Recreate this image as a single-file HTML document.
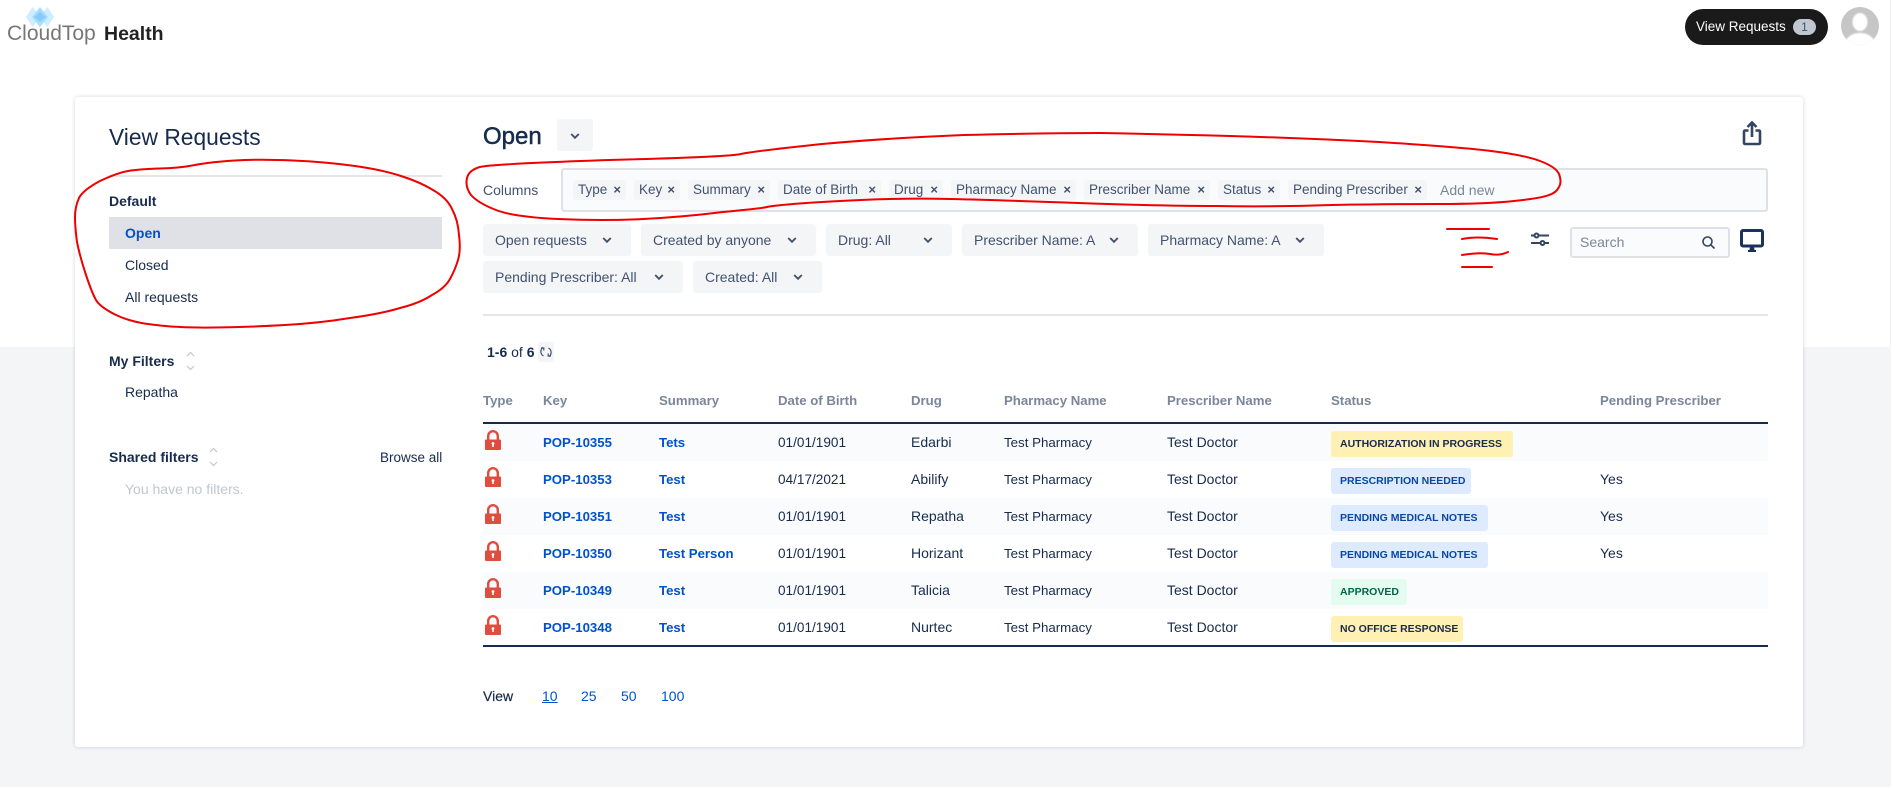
<!DOCTYPE html>
<html lang="en"><head><meta charset="utf-8"><title>View Requests</title>
<style>
html,body{margin:0;padding:0;background:#fff}
body{position:relative;width:1891px;height:787px;overflow:hidden;font-family:"Liberation Sans",sans-serif;font-size:14px;color:#172b4d}
.a,.t,.b,.f,.tag,.row,.badge{position:absolute}
.t{white-space:nowrap;line-height:20px;height:20px}
.bold{font-weight:700}
.blue{color:#0052cc}
.hd{color:#7a869a;font-weight:700;font-size:13.2px}
.k{color:#0052cc;font-weight:700;font-size:13.2px;margin-top:1px}
.p{font-size:13.3px;margin-top:1px}
.d{font-size:13.6px;margin-top:1px}
.f{background:#f4f5f7;border-radius:3px;height:32px;color:#42526e;font-size:14px;line-height:32px;white-space:nowrap;overflow:hidden}
.f span{position:absolute;left:12px;top:0}
.tag{background:#f4f5f7;border-radius:3px;top:180px;height:20px;line-height:20px;color:#42526e;font-size:13.5px;white-space:nowrap;overflow:hidden}
.tag span{position:absolute;left:5px}
.tag i{position:absolute;right:5px;top:0;font-style:normal;font-weight:700;font-size:13px}
.row{left:483px;width:1285px;height:37px}
.badge{left:1331px;height:26px;line-height:26px;border-radius:3px;font-size:10.5px;font-weight:700;white-space:nowrap;box-sizing:border-box;padding-left:9px}
.y{background:#fff0b3;color:#172b4d}.bl{background:#deebff;color:#0747a6}.g{background:#e3fcef;color:#006644}
svg{position:absolute;overflow:visible}
</style></head><body>
<svg width="0" height="0" style="position:absolute"><defs>
<symbol id="chev" viewBox="0 0 10 6"><path d="M1.2 1 5 4.8 8.8 1" fill="none" stroke="#42526e" stroke-width="1.9"/></symbol>
<symbol id="lock" viewBox="0 0 16 20"><path d="M3.200 10V6a4.800 4.800 0 0 1 9.600 0v4" fill="none" stroke="#de4d3e" stroke-width="2.400"/><rect x="0" y="9.500" width="16" height="10.500" rx="1" fill="#de4d3e"/><rect x="7.200" y="13.500" width="1.600" height="3.500" fill="#fff"/><circle cx="8" cy="13.500" r="1.400" fill="#fff"/></symbol>
</defs></svg>

<div class="a" style="left:0;top:347px;width:1891px;height:440px;background:#f4f5f7"></div>
<div class="a" style="left:1890px;top:0;width:1px;height:347px;background:#eceef1"></div>

<!-- Logo -->
<svg style="left:24px;top:5px" width="32" height="24" viewBox="0 0 32 24">
<path d="M8.500 2 17 12 8.500 22 2 12Z" fill="#cdeeff"/><path d="M23.500 2 30 12 23.500 22 15 12Z" fill="#cdeeff"/><path d="M16 2 24 12 16 22 8 12Z" fill="#a8ddfc"/><path d="M16 7 22 12 16 17 10 12Z" fill="#86cbf9"/>
</svg>
<div class="t" style="left:7px;top:24px;font-size:21px;line-height:20px;color:#777">CloudTop</div>
<div class="t bold" style="left:104px;top:24px;font-size:19.500px;color:#222">Health</div>

<!-- Top right -->
<div class="a" style="left:1685px;top:9px;width:143px;height:36px;border-radius:18px;background:#1a1a1a"></div>
<div class="t" style="left:1696px;top:17px;color:#fff;font-size:13.500px">View Requests</div>
<div class="a" style="left:1793px;top:19px;width:23px;height:16px;border-radius:8px;background:#c1c7d0;color:#42526e;font-size:12px;line-height:16px;text-align:center">1</div>
<svg style="left:1841px;top:7px" width="38" height="38" viewBox="0 0 38 38"><defs><clipPath id="av"><circle cx="19" cy="19" r="19"/></clipPath><filter id="bl"><feGaussianBlur stdDeviation="0.900"/></filter></defs><circle cx="19" cy="19" r="19" fill="#c6c6c6"/><g clip-path="url(#av)"><g fill="#fff" filter="url(#bl)"><ellipse cx="19" cy="15" rx="7.500" ry="9"/><path d="M3 40c1-10 8-14 16-14s15 4 16 14Z"/></g></g></svg>

<!-- Card -->
<div class="a" style="left:75px;top:97px;width:1728px;height:650px;background:#fff;border-radius:3px;box-shadow:0 0 4px rgba(9,30,66,.18)"></div>

<!-- Sidebar -->
<div class="t" style="left:109px;top:125px;font-size:22.800px;line-height:24px;height:24px;color:#172b4d">View Requests</div>
<div class="a" style="left:109px;top:175px;width:333px;height:2px;background:#e4e6ea"></div>
<div class="t bold" style="left:109px;top:191px">Default</div>
<div class="a" style="left:109px;top:217px;width:333px;height:32px;background:#dfe1e6"></div>
<div class="t bold blue" style="left:125px;top:223px">Open</div>
<div class="t" style="left:125px;top:255px">Closed</div>
<div class="t" style="left:125px;top:287px">All requests</div>
<div class="t bold" style="left:109px;top:351px">My Filters</div>
<svg style="left:186px;top:351px" width="9" height="20" viewBox="0 0 9 20"><path d="M1 5 4.500 1.500 8 5M1 15 4.500 18.500 8 15" fill="none" stroke="#c1c7d0" stroke-width="1.200"/></svg>
<div class="t" style="left:125px;top:382px">Repatha</div>
<div class="t bold" style="left:109px;top:447px">Shared filters</div>
<svg style="left:209px;top:447px" width="9" height="20" viewBox="0 0 9 20"><path d="M1 5 4.500 1.500 8 5M1 15 4.500 18.500 8 15" fill="none" stroke="#c1c7d0" stroke-width="1.200"/></svg>
<div class="t" style="left:380px;top:448px;font-size:13.500px">Browse all</div>
<div class="t" style="left:125px;top:479px;color:#c1c7d0">You have no filters.</div>

<!-- Title -->
<div class="t" style="left:483px;top:125px;font-size:24px;line-height:24px;height:24px;-webkit-text-stroke:.5px #172b4d">Open</div>
<div class="a" style="left:557px;top:119px;width:36px;height:32px;border-radius:3px;background:#f4f5f7"></div>
<svg style="left:570px;top:133px" width="10" height="6"><use href="#chev"/></svg>
<svg style="left:1743px;top:121px" width="18" height="24" viewBox="0 0 18 24"><path d="M9 16V2M4.500 6 9 1.500 13.500 6" fill="none" stroke="#344563" stroke-width="2.600"/><path d="M5.500 9.500H2a1 1 0 0 0-1 1V22a1 1 0 0 0 1 1h14a1 1 0 0 0 1-1V10.500a1 1 0 0 0-1-1h-3.500" fill="none" stroke="#344563" stroke-width="2.600"/></svg>

<!-- Columns -->
<div class="t" style="left:483px;top:180px;color:#42526e">Columns</div>
<div class="a" style="left:561px;top:168px;width:1207px;height:44px;box-sizing:border-box;border:2px solid #dfe1e6;border-radius:3px;background:#fafbfc"></div>
<div class="tag" style="left:573px;width:53px"><span>Type</span><i>×</i></div>
<div class="tag" style="left:634px;width:46px"><span>Key</span><i>×</i></div>
<div class="tag" style="left:688px;width:82px"><span>Summary</span><i>×</i></div>
<div class="tag" style="left:778px;width:103px"><span>Date of Birth</span><i>×</i></div>
<div class="tag" style="left:889px;width:54px"><span>Drug</span><i>×</i></div>
<div class="tag" style="left:951px;width:125px"><span>Pharmacy Name</span><i>×</i></div>
<div class="tag" style="left:1084px;width:126px"><span>Prescriber Name</span><i>×</i></div>
<div class="tag" style="left:1218px;width:62px"><span>Status</span><i>×</i></div>
<div class="tag" style="left:1288px;width:139px"><span>Pending Prescriber</span><i>×</i></div>
<div class="t" style="left:1440px;top:180px;color:#7a869a">Add new</div>

<!-- Filters -->
<div class="f" style="left:483px;top:224px;width:148px"><span>Open requests</span></div>
<div class="f" style="left:641px;top:224px;width:175px"><span>Created by anyone</span></div>
<div class="f" style="left:826px;top:224px;width:126px"><span>Drug: All</span></div>
<div class="f" style="left:962px;top:224px;width:176px"><span style="width:122px;overflow:hidden">Prescriber Name: All</span></div>
<div class="f" style="left:1148px;top:224px;width:176px"><span style="width:121px;overflow:hidden">Pharmacy Name: All</span></div>
<div class="f" style="left:483px;top:261px;width:200px"><span>Pending Prescriber: All</span></div>
<div class="f" style="left:693px;top:261px;width:129px"><span>Created: All</span></div>
<svg style="left:602px;top:237px" width="10" height="6"><use href="#chev"/></svg>
<svg style="left:787px;top:237px" width="10" height="6"><use href="#chev"/></svg>
<svg style="left:923px;top:237px" width="10" height="6"><use href="#chev"/></svg>
<svg style="left:1109px;top:237px" width="10" height="6"><use href="#chev"/></svg>
<svg style="left:1295px;top:237px" width="10" height="6"><use href="#chev"/></svg>
<svg style="left:654px;top:274px" width="10" height="6"><use href="#chev"/></svg>
<svg style="left:793px;top:274px" width="10" height="6"><use href="#chev"/></svg>

<!-- Sliders -->
<svg style="left:1531px;top:232px" width="18" height="15" viewBox="0 0 18 15" fill="none" stroke="#344563" stroke-width="2"><path d="M0 3.500h3M8 3.500h10M0 11h9M14 11h4"/><circle cx="5.500" cy="3.500" r="2"/><circle cx="11.500" cy="11" r="2"/></svg>
<!-- Search -->
<div class="a" style="left:1570px;top:227px;width:160px;height:31px;box-sizing:border-box;border:2px solid #dfe1e6;border-radius:3px;background:#fafbfc"></div>
<div class="t" style="left:1580px;top:232px;color:#7a869a">Search</div>
<svg style="left:1702px;top:236px" width="13" height="13" viewBox="0 0 13 13" fill="none" stroke="#344563" stroke-width="1.600"><circle cx="5.500" cy="5.500" r="4.500"/><path d="M8.800 8.800 12.500 12.500"/></svg>
<!-- Monitor -->
<svg style="left:1740px;top:229px" width="24" height="23" viewBox="0 0 24 23"><rect x="1.500" y="1.500" width="21" height="15.500" rx="1.500" fill="#fff" stroke="#1b3358" stroke-width="3"/><path d="M10 18h4l.6 3h1.400v2H8v-2h1.400Z" fill="#1b3358"/></svg>

<div class="a" style="left:483px;top:314px;width:1285px;height:2px;background:#e4e6ea"></div>

<!-- Count -->
<div class="t" style="left:487px;top:342px"><b>1-6</b> of <b>6</b></div>
<div class="a" style="left:538px;top:342px;width:16px;height:20px;border-radius:3px;background:#f4f5f7"></div>
<svg style="left:540px;top:346px" width="12" height="12" viewBox="0 0 12 12" fill="none" stroke="#42526e" stroke-width="1.200"><path d="M3 1.500A5 5 0 0 0 3.500 10M1 2h2.800v2.500M9 10.500A5 5 0 0 0 8.500 2M11 10H8.200V7.500"/></svg>

<!-- Table -->
<div class="t hd" style="left:483px;top:391px">Type</div>
<div class="t hd" style="left:543px;top:391px">Key</div>
<div class="t hd" style="left:659px;top:391px">Summary</div>
<div class="t hd" style="left:778px;top:391px">Date of Birth</div>
<div class="t hd" style="left:911px;top:391px">Drug</div>
<div class="t hd" style="left:1004px;top:391px">Pharmacy Name</div>
<div class="t hd" style="left:1167px;top:391px">Prescriber Name</div>
<div class="t hd" style="left:1331px;top:391px">Status</div>
<div class="t hd" style="left:1600px;top:391px">Pending Prescriber</div>
<div class="a" style="left:483px;top:422px;width:1285px;height:2px;background:#172b4d"></div>
<div class="row" style="top:424px;background:#fafbfc"></div>
<div class="row" style="top:498px;background:#fafbfc"></div>
<div class="row" style="top:572px;background:#fafbfc"></div>
<div class="a" style="left:483px;top:645px;width:1285px;height:2px;background:#172b4d"></div>

<svg style="left:485px;top:430px" width="16" height="20"><use href="#lock"/></svg>
<div class="t k" style="left:543px;top:432px">POP-10355</div><div class="t k" style="left:659px;top:432px">Tets</div><div class="t d" style="left:778px;top:432px">01/01/1901</div><div class="t" style="left:911px;top:432px">Edarbi</div><div class="t p" style="left:1004px;top:432px">Test Pharmacy</div><div class="t" style="left:1167px;top:432px">Test Doctor</div>
<div class="badge y" style="top:431px;width:182px">AUTHORIZATION IN PROGRESS</div>

<svg style="left:485px;top:467px" width="16" height="20"><use href="#lock"/></svg>
<div class="t k" style="left:543px;top:469px">POP-10353</div><div class="t k" style="left:659px;top:469px">Test</div><div class="t d" style="left:778px;top:469px">04/17/2021</div><div class="t" style="left:911px;top:469px">Abilify</div><div class="t p" style="left:1004px;top:469px">Test Pharmacy</div><div class="t" style="left:1167px;top:469px">Test Doctor</div>
<div class="badge bl" style="top:468px;width:140px">PRESCRIPTION NEEDED</div><div class="t" style="left:1600px;top:469px">Yes</div>

<svg style="left:485px;top:504px" width="16" height="20"><use href="#lock"/></svg>
<div class="t k" style="left:543px;top:506px">POP-10351</div><div class="t k" style="left:659px;top:506px">Test</div><div class="t d" style="left:778px;top:506px">01/01/1901</div><div class="t" style="left:911px;top:506px">Repatha</div><div class="t p" style="left:1004px;top:506px">Test Pharmacy</div><div class="t" style="left:1167px;top:506px">Test Doctor</div>
<div class="badge bl" style="top:505px;width:157px">PENDING MEDICAL NOTES</div><div class="t" style="left:1600px;top:506px">Yes</div>

<svg style="left:485px;top:541px" width="16" height="20"><use href="#lock"/></svg>
<div class="t k" style="left:543px;top:543px">POP-10350</div><div class="t k" style="left:659px;top:543px">Test Person</div><div class="t d" style="left:778px;top:543px">01/01/1901</div><div class="t" style="left:911px;top:543px">Horizant</div><div class="t p" style="left:1004px;top:543px">Test Pharmacy</div><div class="t" style="left:1167px;top:543px">Test Doctor</div>
<div class="badge bl" style="top:542px;width:157px">PENDING MEDICAL NOTES</div><div class="t" style="left:1600px;top:543px">Yes</div>

<svg style="left:485px;top:578px" width="16" height="20"><use href="#lock"/></svg>
<div class="t k" style="left:543px;top:580px">POP-10349</div><div class="t k" style="left:659px;top:580px">Test</div><div class="t d" style="left:778px;top:580px">01/01/1901</div><div class="t" style="left:911px;top:580px">Talicia</div><div class="t p" style="left:1004px;top:580px">Test Pharmacy</div><div class="t" style="left:1167px;top:580px">Test Doctor</div>
<div class="badge g" style="top:579px;width:76px">APPROVED</div>

<svg style="left:485px;top:615px" width="16" height="20"><use href="#lock"/></svg>
<div class="t k" style="left:543px;top:617px">POP-10348</div><div class="t k" style="left:659px;top:617px">Test</div><div class="t d" style="left:778px;top:617px">01/01/1901</div><div class="t" style="left:911px;top:617px">Nurtec</div><div class="t p" style="left:1004px;top:617px">Test Pharmacy</div><div class="t" style="left:1167px;top:617px">Test Doctor</div>
<div class="badge y" style="top:616px;width:132px">NO OFFICE RESPONSE</div>

<!-- Pager -->
<div class="t" style="left:483px;top:686px;color:#172b4d;-webkit-text-stroke:.2px #172b4d">View</div>
<div class="t blue" style="left:542px;top:686px;text-decoration:underline">10</div>
<div class="t blue" style="left:581px;top:686px">25</div>
<div class="t blue" style="left:621px;top:686px">50</div>
<div class="t blue" style="left:661px;top:686px">100</div>

<!-- Red annotations -->
<svg style="left:0;top:0" width="1891" height="787" fill="none" stroke="#ee0000" stroke-width="2" stroke-linejoin="round" stroke-linecap="round">
<path d="M160 168.500Q180 168 195 165Q210 162 235 160.500Q260 159 293 160.500Q327 162 355 166Q383 170 401 176Q420 182 433 190Q447 198 452 209Q458 220 459 235Q461 250 458 260Q455 270 450 279Q445 288 432 295Q420 303 400 308Q380 314 350 318Q320 323 285 325Q250 327 215 327.500Q180 328 156 325Q133 323 116 315Q100 307 96 300Q92 293 86 275Q80 257 77 242Q75 227 75 217Q75 207 79 198Q83 190 100 181Q117 173 128 171Q140 169 160 168.500Z"/>
<path d="M467 178Q469 170 480 167Q491 164 609 160Q728 157 741 154Q755 151 822 144Q889 138 964 135Q1040 133 1100 133Q1160 134 1230 136Q1300 138 1379 142Q1458 147 1491 151Q1524 155 1540 161Q1556 167 1559 174Q1562 182 1559 187Q1556 193 1549 195Q1542 198 1514 201Q1486 204 1439 204Q1393 204 1332 205Q1272 207 1216 206Q1160 206 1078 203Q996 200 951 199Q906 198 861 200Q817 202 793 204Q770 206 767 207Q764 208 723 212Q683 217 643 219Q603 221 558 219Q514 217 496 210Q478 203 471 195Q465 187 467 178Z"/>
<path d="M1447 229H1489M1462 239Q1477 236 1497 239M1462 255Q1480 252 1490 254T1508 252M1462 267H1492"/>
</svg>
</body></html>
